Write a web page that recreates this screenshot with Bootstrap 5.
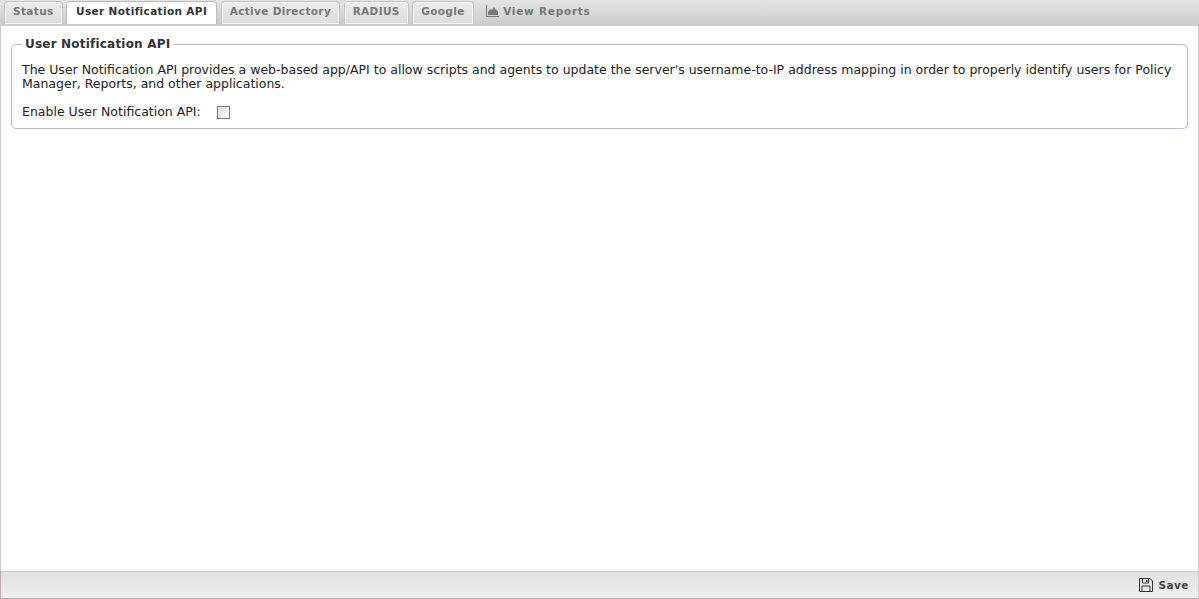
<!DOCTYPE html>
<html lang="en">
<head>
<meta charset="utf-8">
<title>User Notification API</title>
<link href="https://cdn.jsdelivr.net/npm/bootstrap@5.3.0/dist/css/bootstrap.min.css" rel="stylesheet">
<style>
html,body{height:100%;}
body{font-family:"DejaVu Sans",sans-serif;font-size:12.5px;line-height:14px;color:#222;background:#fff;overflow:hidden;}
.shell{height:599px;border-left:1px solid #ccc;border-right:1px solid #ccc;}
.tabbar{height:26px;background:linear-gradient(#e4e4e4,#cdcdcd);border-bottom:2px solid #ccc;padding:0 0 0 4px;gap:3.500px;flex:none;margin-left:-1px;margin-right:-1px;}
.tabitem{height:23px;margin-top:1px;padding:0 8px;border:1px solid #c4c4c4;border-bottom:0;border-radius:4px 4px 0 0;background:linear-gradient(#ececec,#dcdcdc);box-shadow:inset 0 0 0 1px #f5f5f5;font-weight:700;font-size:10.500px;letter-spacing:.36px;color:#777;line-height:19px;white-space:nowrap;text-decoration:none;}
.tabitem.cur{background:#fff;color:#333;box-shadow:none;border-color:#bbb;padding:0 9px;}
.tabitem.bare{border:0;background:none;box-shadow:none;padding:0 0 0 9px;line-height:20px;letter-spacing:.75px;}
.tabitem svg{vertical-align:-2px;margin-right:4px;}
.pane{padding:11px 10px 0 10px;}
.fieldbox{border:1px solid #b9b9cf;border-radius:5px;margin:0;padding:0 10px 10px 10px;min-width:0;height:92px;}
.fieldbox legend{float:none;width:auto;font-size:12px;line-height:14px;font-weight:700;letter-spacing:.2px;color:#333;margin:0;padding:0 3px;}
.fieldbox p{margin:0;padding-top:12px;font-size:12.5px;line-height:14px;}
.optrow{margin-top:14px;gap:16px;}
.tick{appearance:none;width:13px;height:13px;margin:0;border:1px solid #7c7c7c;background:linear-gradient(135deg,#d8d8d8,#fff);box-shadow:inset 0 0 0 1px #eee;display:block;}
.foot{height:28px;background:linear-gradient(#e2e2e2,#eee);border-top:1px solid #ccc;border-bottom:1px solid #bda9a9;margin-left:-1px;margin-right:-1px;padding-right:9px;border-left:1px solid #bda9a9;border-right:1px solid #ccc;flex:none;}
.savebtn{font-weight:700;font-size:10.500px;letter-spacing:.5px;color:#444;gap:5px;}
</style>
</head>
<body>
<div class="shell d-flex flex-column">
  <div class="tabbar d-flex align-items-start">
    <a class="tabitem" href="#">Status</a>
    <a class="tabitem cur" href="#">User Notification API</a>
    <a class="tabitem" href="#">Active Directory</a>
    <a class="tabitem" href="#">RADIUS</a>
    <a class="tabitem" href="#">Google</a>
    <a class="tabitem bare" href="#"><svg width="13" height="12" viewBox="0 0 13 12"><path d="M0 0h1v11h12v1H0z" fill="#777"/><path d="M2 10V7l2-3 2 1 2-3 2 3 2 1v4z" fill="#777"/></svg>View Reports</a>
  </div>
  <div class="pane flex-grow-1">
    <fieldset class="fieldbox">
      <legend>User Notification API</legend>
      <p>The User Notification API provides a web-based app/API to allow scripts and agents to update the server's username-to-IP address mapping in order to properly identify users for Policy Manager, Reports, and other applications.</p>
      <div class="optrow d-flex align-items-center">
        <label for="en">Enable User Notification API:</label>
        <input class="tick" id="en" type="checkbox">
      </div>
    </fieldset>
  </div>
  <div class="foot d-flex align-items-center justify-content-end">
    <div class="savebtn d-flex align-items-center">
      <svg width="14" height="14" viewBox="0 0 14 14"><path d="M.5.5h10.500l2.500 2.500v10.500H.5z" fill="none" stroke="#333"/><path d="M3.500 1v4h6V1M3 13.500V8h8v5.500" fill="none" stroke="#333"/><path d="M7 2h1.500v2H7z" fill="#333"/></svg>
      <span>Save</span>
    </div>
  </div>
</div>
<script src="https://cdn.jsdelivr.net/npm/bootstrap@5.3.0/dist/js/bootstrap.bundle.min.js"></script>
</body>
</html>
